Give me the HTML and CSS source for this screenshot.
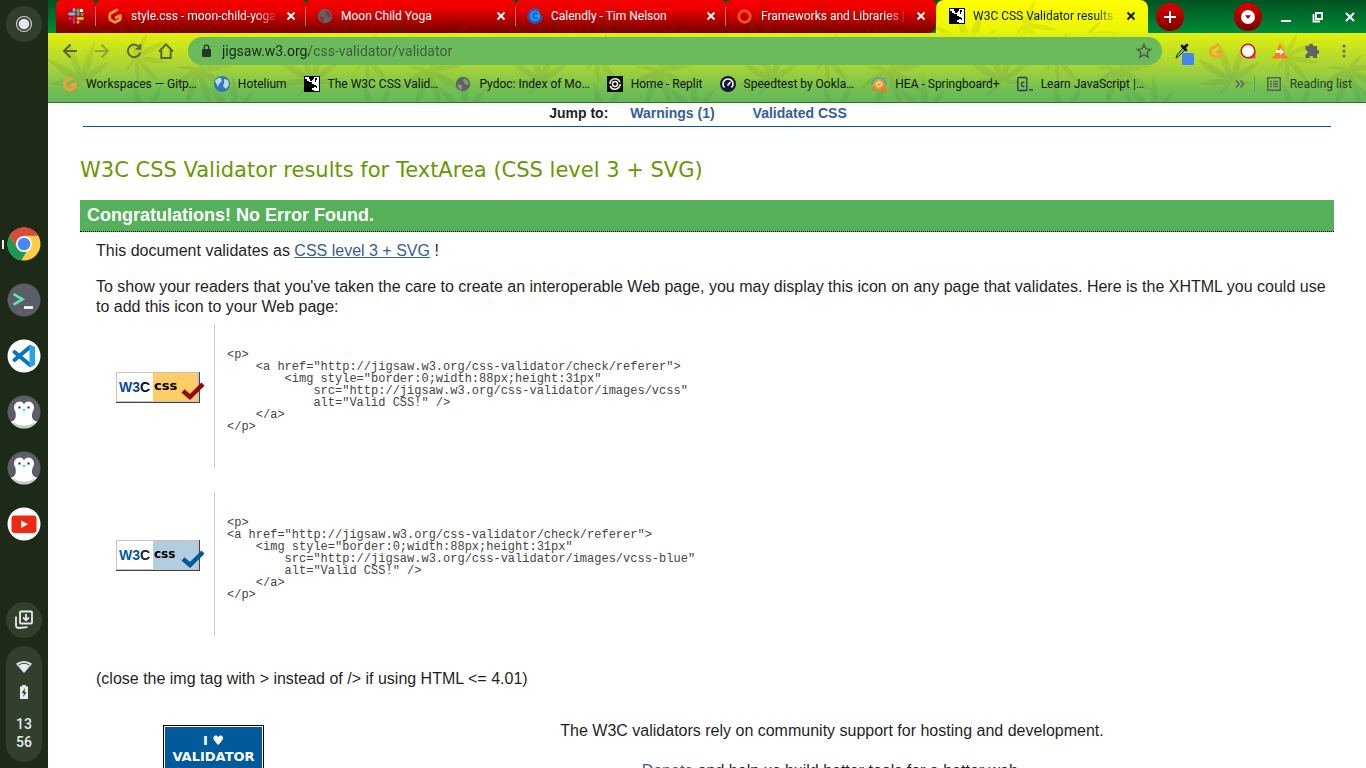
FILE: index.html
```html
<!DOCTYPE html>
<html lang="en">
<head>
<meta charset="utf-8">
<title>W3C CSS Validator results</title>
<link rel="stylesheet" href="styles.css">
</head>
<body>
<svg class="defs" aria-hidden="true">
  <defs>
    <symbol id="gitpod" viewBox="0 0 16 16"><path d="M9.800 2 3.700 5.300q-1 .6-1 1.700v3.400q0 1 1 1.600l3.300 1.900q1 .5 2 0l3.300-1.900q1-.6 1-1.600V7.500L9 9.600" fill="none" stroke="#ff9a3c" stroke-width="2.800" stroke-linecap="round" stroke-linejoin="round"/></symbol>
    <symbol id="globe" viewBox="0 0 16 16"><circle cx="8" cy="8" r="7.200" fill="#5f6368"/><path d="M2.500 8.500h3l1.500 1.500v3.500Q3 13 2.500 8.500zM9 2.500l-1 2 1.500 1-1 2h2l1 1.500 2.300-.5Q13.500 4 9 2.500z" fill="currentColor" opacity=".55"/></symbol>
    <symbol id="w3" viewBox="0 0 16 16"><path d="M0 0h16v16H0z" fill="#000"/><path d="M1 1h4v2h1v2h2V4h1V3h1V1h5v14h-5v-1H8v-2h2v-1h2V9h-2V8H8V6H5V5H3V3H1z" fill="#fff"/><path d="M1 3h2v2h2v3h3v6H1zM11 2h2v2h-1v2h-1zM12 10h1v2h-1z" fill="#000"/></symbol>
    <symbol id="x" viewBox="0 0 10 10"><path d="m1.500 1.500 7 7m0-7-7 7" stroke="currentColor" stroke-width="1.900"/></symbol>
    <symbol id="penguin" viewBox="0 0 34 34"><circle cx="17" cy="17" r="16.500" fill="#5b5e66"/><path d="M3.500 26.500q13-5 27 0A16.500 16.500 0 0 1 3.500 26.500z" fill="#c9cbcc"/><path d="M17 9q-3-4-7.500-1.500Q6 10 7.500 15q2 2.500 1 8-1.500 3-4 4 12 7 25 0-4-2-4.500-5-.6-4 1.500-7 1.500-5-2-7.500Q20 5 17 9z" fill="#fff"/><circle cx="12.500" cy="12.500" r="1.200" fill="#444"/><circle cx="21.500" cy="12.500" r="1.200" fill="#444"/><path d="M15 14.500q2-1.500 4 0l-2 2.500z" fill="#5eead0"/></symbol>
    <g id="leaf" fill="#35502a">
      <path d="M0 0q-7-16 0-42 7 26 0 42z"/>
      <path d="M0 0q-7-16 0-42 7 26 0 42z" transform="rotate(38)"/>
      <path d="M0 0q-7-16 0-42 7 26 0 42z" transform="rotate(-38)"/>
      <path d="M0 0q-6-12 0-34 6 22 0 34z" transform="rotate(75)"/>
      <path d="M0 0q-6-12 0-34 6 22 0 34z" transform="rotate(-75)"/>
      <path d="M0 0q-4-8 0-22 4 14 0 22z" transform="rotate(115)"/>
      <path d="M0 0q-4-8 0-22 4 14 0 22z" transform="rotate(-115)"/>
    </g>
    <pattern id="leaves" width="230" height="110" patternUnits="userSpaceOnUse">
      <g opacity=".1">
        <use href="#leaf" transform="translate(34 48) rotate(-20)"/>
        <use href="#leaf" transform="translate(96 90) rotate(24)"/>
        <use href="#leaf" transform="translate(150 36) rotate(160)"/>
        <use href="#leaf" transform="translate(188 84) rotate(-42)"/>
        <use href="#leaf" transform="translate(88 24) rotate(100) scale(.8)"/>
        <use href="#leaf" transform="translate(34 98) rotate(70) scale(.7)"/>
      </g>
    </pattern>
  </defs>
</svg>
<div class="desktop">
  <nav class="shelf" aria-label="Shelf">
    <button class="round" aria-label="Launcher"><svg width="18" height="18"><circle cx="9" cy="9" r="7.500" fill="none" stroke="#c9cec8" stroke-width="1.200"/><circle cx="9" cy="9" r="5.300" fill="#e8eaed"/></svg></button>
    <div class="apps">
      <button class="app running" aria-label="Chrome"><svg viewBox="0 0 34 34"><circle cx="17" cy="17" r="16.500" fill="#ffcd46"/><path d="M2.700 8.800A16.500 16.500 0 0 1 31.300 8.800H17L10 21z" fill="#d84a3c"/><path d="M2.700 8.800 10 21l7 3.500 3-1-5.500 9.800A16.500 16.500 0 0 1 2.700 8.800z" fill="#199b56"/><circle cx="17" cy="17" r="8" fill="#fff"/><circle cx="17" cy="17" r="6.300" fill="#4889f4"/></svg></button>
      <button class="app" aria-label="Terminal"><svg viewBox="0 0 34 34"><circle cx="17" cy="17" r="16.500" fill="#5b5e66"/><path d="m6.500 11 9 5.300-9 5.300" fill="none" stroke="#5eeab0" stroke-width="2.600"/><path d="M17 24.500h9" stroke="#fff" stroke-width="2.600"/></svg></button>
      <button class="app" aria-label="Visual Studio Code"><svg viewBox="0 0 34 34"><circle cx="17" cy="17" r="16.500" fill="#fff"/><path d="M7.500 13 23 26M7.500 21 23 8" stroke="#0a75bd" stroke-width="4" stroke-linecap="round"/><path d="m22.500 5.500 5.500 2.500v18l-5.500 2.500z" fill="#26a5ef"/></svg></button>
      <button class="app" aria-label="Linux app 1"><svg><use href="#penguin"/></svg></button>
      <button class="app" aria-label="Linux app 2"><svg><use href="#penguin"/></svg></button>
      <button class="app" aria-label="YouTube"><svg viewBox="0 0 34 34"><circle cx="17" cy="17" r="16.500" fill="#fff"/><rect x="4.500" y="8.500" width="25" height="17.500" rx="3" fill="#ed2a11"/><path d="m14 13.500 7 3.700-7 3.700z" fill="#fff"/></svg></button>
    </div>
    <div class="status">
      <button class="round" aria-label="Holding space"><svg width="20" height="20" fill="none" stroke="#e8eaed" stroke-width="1.800"><rect x="6" y="1.500" width="12" height="12" rx="1"/><path d="M2 6.500v9q.2 2.500 2.500 2.500l9-.8"/><path d="M12 4v6m-3-2.500 3 2.800 3-2.800"/></svg></button>
      <button class="tray" aria-label="Status tray">
        <svg width="18" height="14"><path d="M1 3.800Q9-2 17 3.800L9 13z" fill="#e8eaed"/><path d="M3.500 5Q9 1.500 14.500 5" stroke="#35432f" fill="none"/></svg>
        <svg width="10" height="16"><path d="M3 1h4v1.500h2V15H1V2.500h2z" fill="#e8eaed"/><path d="M6 4 2.800 9h2l-.5 4L7.500 8h-2z" fill="#2b3926"/></svg>
        <span class="clock">13<br>56</span>
      </button>
    </div>
  </nav>
  <div class="window">
    <header class="chrome">
      <div class="tabstrip">
        <div class="tab pinned"><svg class="leaves"><rect width="100%" height="100%" fill="url(#leaves)"/></svg><svg class="icon" viewBox="0 0 16 16" stroke-width="2.800" stroke-linecap="round" aria-label="Slack"><path d="M1.500 6h4.500M6 1.500v1" stroke="#59c5ef"/><path d="M10 2v4.500M14 6.500h.3" stroke="#41b57c"/><path d="M10 10.500h4.500M10 14v.3" stroke="#edb52e"/><path d="M6 10v4.500M2 10.500h.3" stroke="#e0206b"/><circle cx="13.500" cy="2.500" r="1.800" fill="#fff"/></svg></div>
        <div class="tab"><svg class="leaves"><rect width="100%" height="100%" fill="url(#leaves)"/></svg><svg class="icon"><use href="#gitpod"/></svg><span class="title fade">style.css - moon-child-yoga - Gitpod</span><button class="close" aria-label="Close tab"><svg><use href="#x"/></svg></button></div>
        <div class="tab"><svg class="leaves"><rect width="100%" height="100%" fill="url(#leaves)"/></svg><svg class="icon land-red"><use href="#globe"/></svg><span class="title">Moon Child Yoga</span><button class="close" aria-label="Close tab"><svg><use href="#x"/></svg></button></div>
        <div class="tab"><svg class="leaves"><rect width="100%" height="100%" fill="url(#leaves)"/></svg><svg class="icon" viewBox="0 0 16 16"><circle cx="8" cy="8" r="7" fill="none" stroke="#1263e8" stroke-width="1.500" stroke-dasharray="38 6"/><circle cx="8" cy="8" r="5.500" fill="#08a5f5"/><path d="M10.500 6q-2.500-1.500-4 .3-1 2 .3 3.500 2 1.300 3.700 0" fill="none" stroke="#0757e8" stroke-width="2"/></svg><span class="title">Calendly - Tim Nelson</span><button class="close" aria-label="Close tab"><svg><use href="#x"/></svg></button></div>
        <div class="tab last"><svg class="leaves"><rect width="100%" height="100%" fill="url(#leaves)"/></svg><svg class="icon" viewBox="0 0 16 16"><circle cx="7.500" cy="8.500" r="5.700" fill="none" stroke="#ff4d20" stroke-width="3"/></svg><span class="title fade">Frameworks and Libraries | Learn</span><button class="close" aria-label="Close tab"><svg><use href="#x"/></svg></button></div>
        <div class="tab active"><svg class="leaves"><rect width="100%" height="100%" fill="url(#leaves)"/></svg><svg class="icon"><use href="#w3"/></svg><span class="title fade">W3C CSS Validator results for TextArea</span><button class="close" aria-label="Close tab"><svg><use href="#x"/></svg></button></div>
        <button class="bubble" aria-label="New tab"><svg width="12" height="12"><path d="M6 0v12M0 6h12" stroke="#fff" stroke-width="2"/></svg></button>
        <div class="controls">
          <button class="bubble" aria-label="Search tabs"><svg width="14" height="14"><circle cx="7" cy="7" r="7" fill="#fff"/><path d="M4 5.200h6L7 9z" fill="#b00000"/></svg></button>
          <button class="ctl" aria-label="Minimise"><svg width="12" height="12"><path d="M1 10h10" stroke="#fff" stroke-width="2"/></svg></button>
          <button class="ctl" aria-label="Restore"><svg width="12" height="12" fill="none" stroke="#fff" stroke-width="1.800"><path d="M4 2h6v6H4zM1.500 3v7.500H8"/></svg></button>
          <button class="ctl" aria-label="Close"><svg width="12" height="12"><path d="m2 2 8 8m0-8-8 8" stroke="#fff" stroke-width="1.900"/></svg></button>
        </div>
      </div>
      <div class="bars">
        <svg class="leaves"><rect width="100%" height="100%" fill="url(#leaves)"/></svg>
        <div class="toolbar">
          <button class="tool" aria-label="Back"><svg viewBox="0 0 16 16"><path d="M15 8H2m6.500-6.500L2 8l6.500 6.500"/></svg></button>
          <button class="tool dim" aria-label="Forward"><svg viewBox="0 0 16 16"><path d="M1 8h13M7.500 1.500 14 8l-6.500 6.500"/></svg></button>
          <button class="tool" aria-label="Reload"><svg viewBox="0 0 16 16"><path d="M13.500 4.500A6.300 6.300 0 1 0 14.300 9.500M14.300 1v4.700H9.600"/></svg></button>
          <button class="tool" aria-label="Home"><svg viewBox="0 0 16 16"><path d="M1 8.500 8 1.300l7 7.200M3.300 7v8h9.400V7"/></svg></button>
          <form class="omnibox">
            <svg width="10" height="14"><rect y="5" width="9" height="8" rx="1" fill="#24352a"/><path d="M2.200 6V3.500a2.300 2.300 0 0 1 4.600 0V6" fill="none" stroke="#24352a" stroke-width="1.300"/></svg>
            <input class="url" type="text" aria-label="Address" value="jigsaw.w3.org/css-validator/validator">
            <button class="star" type="button" aria-label="Bookmark"><svg width="16" height="16"><path d="m8 1.500 1.900 4.400 4.800.4-3.600 3.200 1.100 4.700L8 11.700l-4.200 2.500 1.100-4.700L1.300 6.300l4.800-.4z" fill="none" stroke="#47604a" stroke-width="1.500"/></svg></button>
          </form>
          <div class="extensions">
            <button class="ext" aria-label="Colour picker"><svg viewBox="0 0 20 20"><path d="m2 17 1-3 6-7 2 2-6 6z" fill="#7fc39d" stroke="#222"/><path d="m8 5 4 4M10.500 6.500 13 4" stroke="#111" stroke-width="2.800" stroke-linecap="round"/><rect x="8" y="12" width="12" height="12" rx="1.500" fill="#4285f4"/></svg></button>
            <button class="ext" aria-label="Gitpod"><svg viewBox="-2 -2 20 20"><use href="#gitpod" width="16" height="16"/></svg></button>
            <button class="ext" aria-label="Recorder"><svg viewBox="0 0 20 20"><path d="M10 10h7.500v7.500H10z" fill="#e05045"/><circle cx="10" cy="10" r="6.800" fill="#fff" stroke="#d1161b" stroke-width="1.500"/></svg></button>
            <button class="ext" aria-label="Cone"><svg viewBox="0 0 20 20"><path d="M10 2 4.500 15H3l-1 2.500h16L17 15h-1.500z" fill="#ff7a22"/><path d="M6 9h4V7l4 4-4 3v-2H6z" fill="#eee"/></svg></button>
            <button class="ext" aria-label="Extensions"><svg viewBox="0 0 20 20"><path d="M3.500 5H7a2.200 2.200 0 0 1 4.400 0H15v3.700a2.200 2.200 0 0 1 0 4.400V17h-3.600a2 2 0 0 0-4 0H3.500v-3.500a2.100 2.100 0 0 0 0-4.300z" fill="#5f6368"/></svg></button>
            <button class="ext" aria-label="Menu"><svg viewBox="0 0 20 20" fill="#5f6368"><circle cx="10" cy="5" r="1.500"/><circle cx="10" cy="10" r="1.500"/><circle cx="10" cy="15" r="1.500"/></svg></button>
          </div>
        </div>
        <nav class="bookmarks" aria-label="Bookmarks">
          <a href="#"><svg class="icon"><use href="#gitpod"/></svg>Workspaces — Gitp…</a>
          <a href="#"><svg class="icon" viewBox="0 0 16 16"><circle cx="8" cy="8" r="8" fill="#3275bd"/><path d="M1 5q3-4 6-3l1 3-3 3-1 3zM10 3l4 1 1 5-3 4-3-3 1-3z" fill="#b8dcf5"/></svg>Hotelium</a>
          <a href="#"><svg class="icon"><use href="#w3"/></svg>The W3C CSS Valid…</a>
          <a href="#"><svg class="icon land-green"><use href="#globe"/></svg>Pydoc: Index of Mo…</a>
          <a href="#"><svg class="icon" viewBox="0 0 16 16"><path d="M0 0h16v16H0z" fill="#0c0c0c"/><circle cx="8" cy="8" r="5.200" fill="none" stroke="#eee" stroke-width="1.600" stroke-dasharray="14 2"/><circle cx="8" cy="8" r="2.500" fill="none" stroke="#eee" stroke-width="1.500"/></svg>Home - Replit</a>
          <a href="#"><svg class="icon" viewBox="0 0 16 16"><circle cx="8" cy="8" r="8" fill="#171a35"/><path d="M4.500 11.500a5 5 0 1 1 7 0M7.500 9.500 10.500 6" fill="none" stroke="#fff" stroke-width="1.600"/></svg>Speedtest by Ookla…</a>
          <a href="#"><svg class="icon" viewBox="0 0 16 16"><path d="M1 9A7 7 0 0 1 15 9" fill="none" stroke="#4aa3bd" stroke-width="2"/><circle cx="8" cy="8" r="5.500" fill="#f59b2c"/><path d="m0 15 3-5 3 4zM9 13l3-2 4 2v3h-4z" fill="#ff7417"/><path d="M6.500 6a2.600 2.600 0 1 0 3 0M8 4.500v3" stroke="#fff" fill="none"/></svg>HEA - Springboard+</a>
          <a href="#"><svg class="icon" viewBox="0 0 16 16" fill="none" stroke="#203b60" stroke-width="1.300"><rect x=".8" y="1.500" width="9" height="13" rx="1"/><path d="M7.500 6.500q-3-1-3 1.800t3 2M12 13.800h4"/></svg>Learn JavaScript |…</a>
          <div class="more"><button class="chevrons" aria-label="More bookmarks"><svg width="10" height="10"><path d="m1 1.500 3 3.500-3 3.500M5.500 1.500l3 3.500-3 3.500" fill="none" stroke="#5f6368" stroke-width="1.600"/></svg></button>
          <button class="reading"><svg width="14" height="14" fill="none" stroke="#50665a" stroke-width="1.600"><path d="M.8.800h12.400v12.400H.8zM3 4.500h2m1 0h5M3 7h2m1 0h5M3 9.500h2m1 0h5"/></svg>Reading list</button></div>
        </nav>
      </div>
    </header>
    <main class="page">
      <div class="jump"><strong>Jump to:</strong><a href="#warnings">Warnings (1)</a><a href="#css">Validated CSS</a></div>
      <h2>W3C CSS Validator results for TextArea (CSS level 3 + SVG)</h2>
      <h3>Congratulations! No Error Found.</h3>
      <div class="body">
        <p>This document validates as <a href="#css3">CSS level 3 + SVG</a> !</p>
        <p>To show your readers that you've taken the care to create an interoperable Web page, you may display this icon on any page that validates. Here is the XHTML you could use to add this icon to your Web page:</p>
        <div class="snippet">
          <svg class="badge" width="88" height="31" role="img" aria-label="Valid CSS!"><path d="M0 0h84v31H0z" fill="#444"/><path d="M0 0h83v30H0z" fill="#c4c4c4"/><path d="M1 1h36v28H1z" fill="#fff"/><path d="M37 1h44v28H37z" fill="#fc6"/><text x="3" y="20" class="w3c"><tspan fill="#0c479d">W3</tspan><tspan fill="#111">C</tspan></text><text x="38" y="18" class="css">css</text><path d="m67 19 7 6 13-13" fill="none" stroke="#900b09" stroke-width="4.500"/></svg>
<pre>
&lt;p&gt;
    &lt;a href="http://jigsaw.w3.org/css-validator/check/referer"&gt;
        &lt;img style="border:0;width:88px;height:31px"
            src="http://jigsaw.w3.org/css-validator/images/vcss"
            alt="Valid CSS!" /&gt;
    &lt;/a&gt;
&lt;/p&gt;
</pre>
        </div>
        <div class="snippet">
          <svg class="badge" width="88" height="31" role="img" aria-label="Valid CSS!"><path d="M0 0h84v31H0z" fill="#444"/><path d="M0 0h83v30H0z" fill="#c4c4c4"/><path d="M1 1h36v28H1z" fill="#fff"/><path d="M37 1h44v28H37z" fill="#b3cde0"/><text x="3" y="20" class="w3c"><tspan fill="#005a9c">W3</tspan><tspan fill="#222">C</tspan></text><text x="38" y="18" class="css slim">css</text><path d="m67 19 7 6 13-13" fill="none" stroke="#005a9c" stroke-width="4.500"/></svg>
<pre>
&lt;p&gt;
&lt;a href="http://jigsaw.w3.org/css-validator/check/referer"&gt;
    &lt;img style="border:0;width:88px;height:31px"
        src="http://jigsaw.w3.org/css-validator/images/vcss-blue"
        alt="Valid CSS!" /&gt;
    &lt;/a&gt;
&lt;/p&gt;
</pre>
        </div>
        <p class="note">(close the img tag with &gt; instead of /&gt; if using HTML &lt;= 4.01)</p>
      </div>
      <section class="support">
        <div class="love"><span>I ♥</span><span>VALIDATOR</span></div>
        <div class="donate">
          <p>The W3C validators rely on community support for hosting and development.</p>
          <p><a href="#donate">Donate</a> and help us build better tools for a better web.</p>
        </div>
      </section>
    </main>
  </div>
</div>
</body>
</html>
```
FILE: styles.css
```css
* { box-sizing: border-box; }
body { margin: 0; font-family: "Liberation Sans", Arial, sans-serif; color: #1f1f23; }
button, input { font: inherit; color: inherit; background: none; border: 0; padding: 0; margin: 0; }
svg { display: block; }
.defs { position: absolute; width: 0; height: 0; }
.desktop { display: flex; height: 100vh; overflow: hidden; }

.shelf { width: 48px; flex: none; background: #1d2a17; display: grid; grid-template-rows: 1fr auto 1fr; justify-items: center; padding: 6px 0; }
.round { width: 36px; height: 36px; border-radius: 50%; background: #31402d; display: grid; place-items: center; }
.apps { display: flex; flex-direction: column; gap: 22px; }
.app { width: 34px; height: 34px; position: relative; border-radius: 50%; }
.app svg { width: 34px; height: 34px; }
.running::before { content: ""; position: absolute; left: -5px; top: 13px; width: 2px; height: 9px; background: #e8eaed; }
.status { display: flex; flex-direction: column; justify-content: flex-end; gap: 8px; }
.tray { width: 36px; height: 116px; border-radius: 18px; background: #31402d; display: flex; flex-direction: column; align-items: center; gap: 10px; padding: 14px 0 0; }
.clock { font: 500 14px/18px Roboto, sans-serif; color: #e8eaed; padding: 5px 0 0; }

.window { flex: 1; min-width: 0; display: flex; flex-direction: column; background: #fff; }
.chrome { flex: none; font-family: Roboto, sans-serif; font-size: 12px; color: #101510; border-bottom: 1px solid #2c7a22; }
.tabstrip { display: flex; align-items: center; height: 33px; padding-left: 8px; background: linear-gradient(#005221, #008c38); }
.tab { flex: 0 1 210px; min-width: 0; height: 33px; display: flex; align-items: center; gap: 8px; padding: 0 10px 1px 11px; color: #fff; background: linear-gradient(#f80000, #e80000 30%, #8a0000 85%, #780000); border-radius: 5px 5px 0 0; position: relative; }
.tab:not(.active) + .tab:not(.active)::before { content: ""; position: absolute; left: -1px; top: 7px; width: 1px; height: 19px; background: #c47070; }
.pinned { flex: none; width: 40px; padding-left: 12px; }
.last { border-bottom-right-radius: 8px; }
.tab.active { flex-basis: 212px; color: #101510; background: linear-gradient(#ff0, #e8f508); border-radius: 8px 8px 0 0; overflow: hidden; padding: 0 12px 1px 13px; }
.icon { width: 16px; height: 16px; flex: none; position: relative; }
.land-red { color: #c00000; }
.land-green { color: #a6d27a; }
.title { flex: 1; min-width: 0; white-space: nowrap; overflow: hidden; position: relative; }
.fade { mask-image: linear-gradient(90deg, #000 85%, transparent); }
.close { width: 10px; height: 10px; position: relative; }
.close svg { width: 10px; height: 10px; }
.bubble { width: 28px; height: 28px; flex: none; border-radius: 50%; background: linear-gradient(#e00000, #7a0000); display: grid; place-items: center; margin-left: 8px; }
.controls { margin-left: auto; display: flex; align-items: center; gap: 20px; padding-right: 10px; }
.controls .bubble { margin-right: -2px; }
.ctl { width: 12px; height: 12px; }

.bars { position: relative; overflow: hidden; height: 69px; background: linear-gradient(#e2f00d, #a5d338 50%, #6fbe55 85%, #66b658); }
.leaves { position: absolute; inset: 0; width: 100%; height: 100%; }
.toolbar { position: relative; display: flex; align-items: center; gap: 16px; padding: 4px 12px 0 14px; height: 32px; }
.tool { width: 16px; height: 16px; flex: none; }
.tool svg { width: 16px; height: 16px; fill: none; stroke: #5c6440; stroke-width: 2; }
.dim { opacity: .45; }
.omnibox { flex: 1; min-width: 0; height: 28px; border-radius: 14px; background: #6bba5c; display: flex; align-items: center; padding: 0 10px 0 14px; gap: 10px; margin-left: -2px; }
.url { flex: 1; min-width: 0; font-size: 14px; height: 20px; color: transparent; background: linear-gradient(90deg, #1c241c 87px, #3d5a3b 87px); background-clip: text; -webkit-background-clip: text; }
.extensions { display: flex; gap: 12px; margin-left: -4px; }
.ext { width: 20px; height: 20px; }
.ext svg { width: 20px; height: 20px; overflow: visible; }
.bookmarks { position: relative; display: flex; align-items: center; gap: 17px; height: 37px; padding: 0 14px; }
.bookmarks a { display: flex; align-items: center; gap: 8px; color: inherit; text-decoration: none; white-space: nowrap; }
.more { margin-left: auto; display: flex; align-items: center; gap: 9px; }
.reading { display: flex; align-items: center; gap: 9px; padding-left: 12px; border-left: 1px solid #68a05c; height: 16px; color: #25402a; }

.page { flex: 1; min-height: 0; overflow: hidden; padding: 0 32px; }
.page a { color: #365d95; }
.jump { display: flex; justify-content: center; gap: 22px; margin: 0 3px; padding: 0 18px 3px 0; border-bottom: 1px solid #005a9c; font-size: 14px; line-height: 20px; font-weight: bold; }
.jump a { text-decoration: none; }
.jump a + a { margin-left: 16px; }
h2 { margin: 29px 0 16px; font: normal 21px/28px "DejaVu Sans", Verdana, sans-serif; color: #690; }
h3 { margin: 0; padding: 0 7px; font-size: 18px; line-height: 31px; color: #fff; background: #55b05a; border-bottom: 1px dotted #000; }
.body { padding: 9px 0 0 16px; line-height: 20px; }
.body p { margin: 0 0 16px; }
.body p:nth-child(2) { margin-bottom: 7px; }
.snippet { display: flex; align-items: center; margin-bottom: 24px; padding-left: 20px; height: 144px; }
.badge { flex: none; margin: 0 10px 18px 0; }
.w3c { font: bold 14px "Liberation Sans", sans-serif; }
.css { font: bold 13px "DejaVu Sans", sans-serif; fill: #000; }
.slim { font-size: 12px; }
pre { margin: 0; height: 144px; padding: 25px 12px; border-left: 1px solid #ccc; font: 12px/12px "Liberation Mono", monospace; color: #444; }
.body .note { margin: 33px 0 0; }
.support { display: flex; align-items: flex-start; padding: 36px 0 0 83px; line-height: 20px; }
.love { width: 101px; height: 60px; flex: none; border: 1px solid #000; outline: 1px solid #fff; outline-offset: -2px; background: #005a9c; color: #fff; display: flex; flex-direction: column; align-items: center; padding-top: 7px; font: bold 13px/16px "DejaVu Sans", sans-serif; }
.donate { flex: 1; text-align: center; padding-left: 66px; }
.donate p { margin: 0 0 20px; }
.donate p:first-child { margin-top: -4px; }
```
